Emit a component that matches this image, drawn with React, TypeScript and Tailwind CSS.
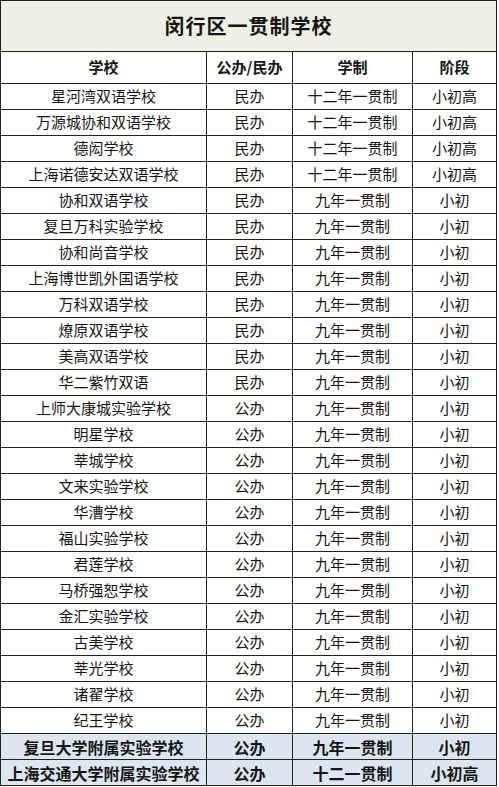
import React from 'react';

type Row = [string, string, string, string];

const rows: Row[] = [
  ['星河湾双语学校', '民办', '十二年一贯制', '小初高'],
  ['万源城协和双语学校', '民办', '十二年一贯制', '小初高'],
  ['德闳学校', '民办', '十二年一贯制', '小初高'],
  ['上海诺德安达双语学校', '民办', '十二年一贯制', '小初高'],
  ['协和双语学校', '民办', '九年一贯制', '小初'],
  ['复旦万科实验学校', '民办', '九年一贯制', '小初'],
  ['协和尚音学校', '民办', '九年一贯制', '小初'],
  ['上海博世凯外国语学校', '民办', '九年一贯制', '小初'],
  ['万科双语学校', '民办', '九年一贯制', '小初'],
  ['燎原双语学校', '民办', '九年一贯制', '小初'],
  ['美高双语学校', '民办', '九年一贯制', '小初'],
  ['华二紫竹双语', '民办', '九年一贯制', '小初'],
  ['上师大康城实验学校', '公办', '九年一贯制', '小初'],
  ['明星学校', '公办', '九年一贯制', '小初'],
  ['莘城学校', '公办', '九年一贯制', '小初'],
  ['文来实验学校', '公办', '九年一贯制', '小初'],
  ['华漕学校', '公办', '九年一贯制', '小初'],
  ['福山实验学校', '公办', '九年一贯制', '小初'],
  ['君莲学校', '公办', '九年一贯制', '小初'],
  ['马桥强恕学校', '公办', '九年一贯制', '小初'],
  ['金汇实验学校', '公办', '九年一贯制', '小初'],
  ['古美学校', '公办', '九年一贯制', '小初'],
  ['莘光学校', '公办', '九年一贯制', '小初'],
  ['诸翟学校', '公办', '九年一贯制', '小初'],
  ['纪王学校', '公办', '九年一贯制', '小初'],
];

const highlighted: Row[] = [
  ['复旦大学附属实验学校', '公办', '九年一贯制', '小初'],
  ['上海交通大学附属实验学校', '公办', '十二一贯制', '小初高'],
];

const cell = 'flex items-center justify-center border-r border-b border-[#222] whitespace-nowrap';

export default function App() {
  return (
    <div
      className="w-[499px] min-h-[787px] bg-white text-[#151515]"
      style={{ fontFamily: '"Noto Sans CJK SC", "Noto Sans", sans-serif' }}
    >
      <div className="grid w-[497px] grid-cols-[206px_86px_120px_84px] border-l border-t border-[#222]">
        {/* Title */}
        <div className="col-span-4 flex h-[51px] items-center justify-center border-r border-b border-[#222] bg-[#eef0e3] text-[20px] font-bold tracking-[1px]">
          闵行区一贯制学校
        </div>

        {/* Header */}
        {['学校', '公办/民办', '学制', '阶段'].map((h) => (
          <div key={h} className={`${cell} h-[32px] text-[15px] font-bold`}>
            {h}
          </div>
        ))}

        {/* Rows */}
        {rows.map((r, i) => (
          <React.Fragment key={i}>
            {r.map((c, j) => (
              <div key={j} className={`${cell} h-[26px] text-[15px]`}>
                {c}
              </div>
            ))}
          </React.Fragment>
        ))}

        {highlighted.map((r, i) => (
          <React.Fragment key={'h' + i}>
            {r.map((c, j) => (
              <div key={j} className={`${cell} h-[26px] bg-[#dce6f1] text-[16px] font-bold`}>
                {c}
              </div>
            ))}
          </React.Fragment>
        ))}
      </div>
    </div>
  );
}
